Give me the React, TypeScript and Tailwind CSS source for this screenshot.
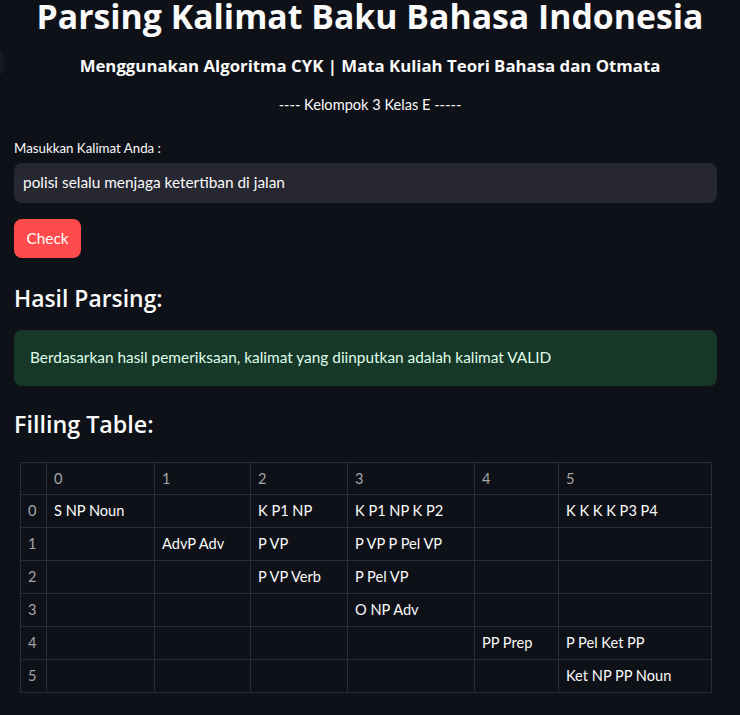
import React from "react";

const cols = [
  { w: 26 },
  { w: 108 },
  { w: 96 },
  { w: 97 },
  { w: 127 },
  { w: 84 },
  { w: 153 },
];

const rows: string[][] = [
  ["S NP Noun", "", "K P1 NP", "K P1 NP K P2", "", "K K K K P3 P4"],
  ["", "AdvP Adv", "P VP", "P VP P Pel VP", "", ""],
  ["", "", "P VP Verb", "P Pel VP", "", ""],
  ["", "", "", "O NP Adv", "", ""],
  ["", "", "", "", "PP Prep", "P Pel Ket PP"],
  ["", "", "", "", "", "Ket NP PP Noun"],
];

export default function App() {
  const font = { fontFamily: "Lato, 'Noto Sans', sans-serif" };
  const head = { fontFamily: "'Open Sans', 'Noto Sans', sans-serif" };
  return (
    <div
      className="relative min-h-[715px] w-[740px] overflow-hidden bg-[#0e1117] text-[#fafafa]"
      style={font}
    >
      <div className="absolute left-[-31px] top-[45px] h-[36px] w-[36px] rounded-full bg-[#171a21]" />
      <div className="px-[14px]">
        <h1
          className="h-[32px] whitespace-nowrap text-center text-[33.8px] font-bold leading-[32px]"
          style={head}
        >
          Parsing Kalimat Baku Bahasa Indonesia
        </h1>
        <h3
          className="mt-[22px] h-[24px] whitespace-nowrap text-center text-[16.8px] font-bold leading-[24px]"
          style={head}
        >
          Menggunakan Algoritma CYK | Mata Kuliah Teori Bahasa dan Otmata
        </h3>
        <p className="mt-[16px] h-[22px] text-center text-[14.6px] leading-[22px]">
          ---- Kelompok 3 Kelas E -----
        </p>
        <label className="mt-[22px] block h-[20px] text-[13.3px] leading-[20px]">
          Masukkan Kalimat Anda :
        </label>
        <div className="mt-[5px] flex h-[40px] w-[703px] items-center rounded-[8px] bg-[#262730] px-[9px] text-[15.4px]">
          polisi selalu menjaga ketertiban di jalan
        </div>
        <button className="mt-[16px] flex h-[39px] w-[67px] items-center justify-center rounded-[8px] bg-[#ff4b4b] text-[15.4px] text-white">
          Check
        </button>
        <h2
          className="mt-[22px] h-[38px] text-[22.9px] font-semibold leading-[38px]"
          style={head}
        >
          Hasil Parsing:
        </h2>
        <div className="mt-[12px] flex h-[56px] w-[703px] items-center rounded-[8px] bg-[#173828] px-[16px] text-[15.4px] text-[#dffde9]">
          Berdasarkan hasil pemeriksaan, kalimat yang diinputkan adalah kalimat VALID
        </div>
        <h2
          className="mt-[19px] h-[38px] text-[23.3px] font-semibold leading-[38px]"
          style={head}
        >
          Filling Table:
        </h2>
        <div className="mt-[19px] ml-[6px]">
          <table className="border-collapse text-[14.6px]">
            <thead>
              <tr className="h-[32px]">
                {cols.map((c, i) => (
                  <th
                    key={i}
                    className="border border-[#2a2d34] px-[7px] text-left font-normal text-[#a3a5a9]"
                    style={{ width: c.w, minWidth: c.w }}
                  >
                    {i === 0 ? "" : String(i - 1)}
                  </th>
                ))}
              </tr>
            </thead>
            <tbody>
              {rows.map((r, ri) => (
                <tr key={ri} className="h-[33px]">
                  <td className="border border-[#2a2d34] px-[7px] text-[#a3a5a9]">
                    {ri}
                  </td>
                  {r.map((cell, ci) => (
                    <td
                      key={ci}
                      className="border border-[#2a2d34] px-[7px] text-[#fafafa]"
                    >
                      {cell}
                    </td>
                  ))}
                </tr>
              ))}
            </tbody>
          </table>
        </div>
      </div>
    </div>
  );
}
